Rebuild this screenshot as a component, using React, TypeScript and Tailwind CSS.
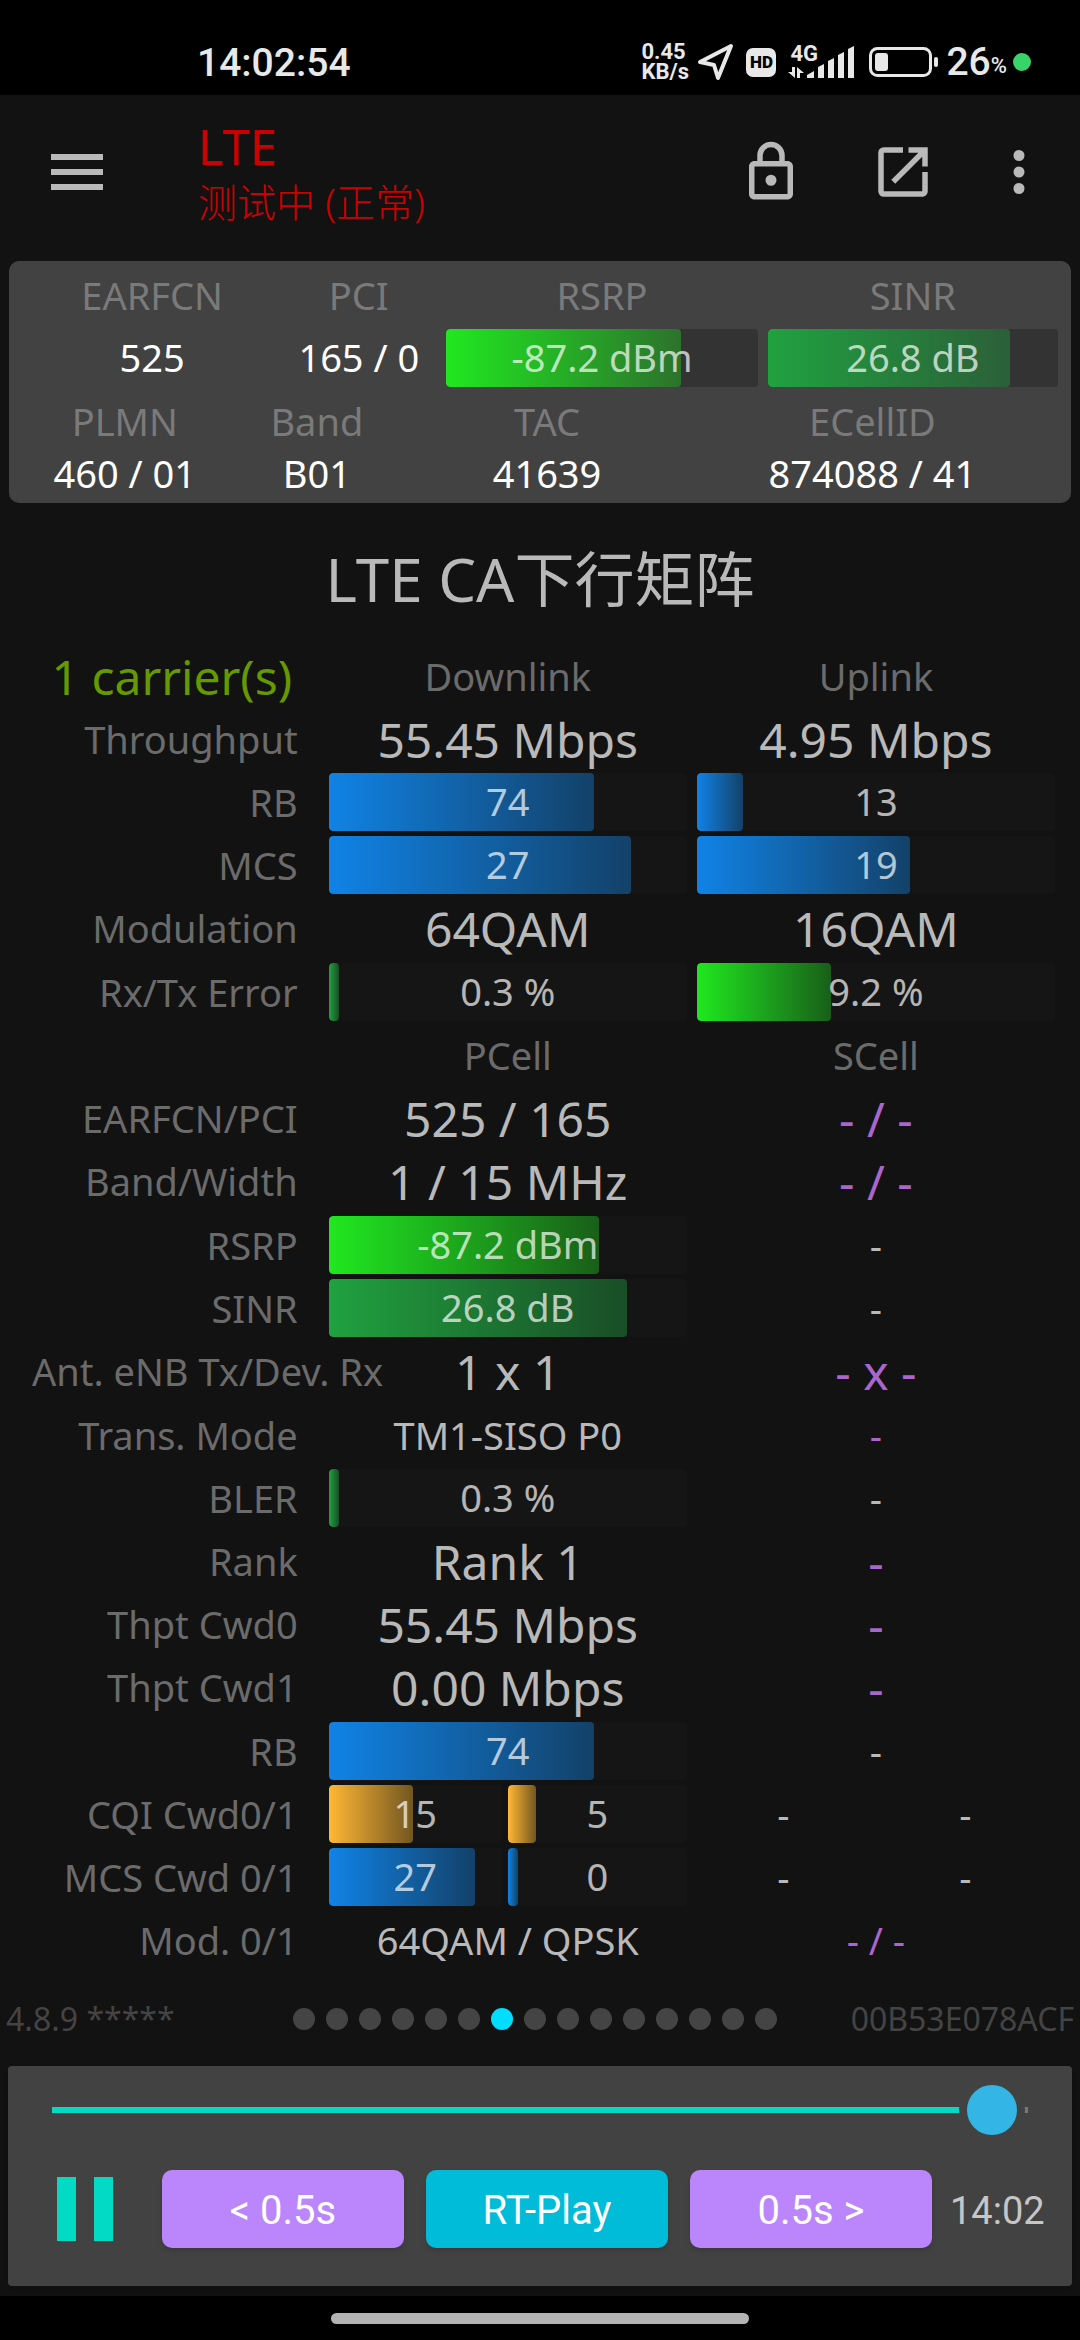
import type { ReactNode } from "react";
import clsx from "clsx";

type Tone = "blue" | "lime" | "green" | "amber";

type Cell =
  | { kind: "head"; text: string }
  | { kind: "text"; text: string; small?: boolean; none?: boolean }
  | { kind: "bar"; text: string; percent: number; tone: Tone }
  | { kind: "plain"; text: string }
  | { kind: "pair"; cells: [Cell, Cell] };

type Row = { label: string; cells: [Cell, Cell]; tall?: boolean };

const TONES: Record<Tone, string> = {
  blue: "from-[#1083e6] to-[#1083e6]/40",
  lime: "from-[#20e820] to-[#20e820]/35",
  green: "from-[#20a240] to-[#20a240]/40",
  amber: "from-[#ffb833] to-[#ffb833]/40",
};

const head = (text: string): Cell => ({ kind: "head", text });
const big = (text: string): Cell => ({ kind: "text", text });
const small = (text: string): Cell => ({ kind: "text", text, small: true });
const none = (text: string, isSmall = false): Cell => ({ kind: "text", text, small: isSmall, none: true });
const plain = (text: string): Cell => ({ kind: "plain", text });
const bar = (text: string, percent: number, tone: Tone): Cell => ({ kind: "bar", text, percent, tone });
const pair = (a: Cell, b: Cell): Cell => ({ kind: "pair", cells: [a, b] });

const ROWS: Row[] = [
  { label: "Throughput", cells: [big("55.45 Mbps"), big("4.95 Mbps")] },
  { label: "RB", cells: [bar("74", 74, "blue"), bar("13", 13, "blue")] },
  { label: "MCS", cells: [bar("27", 84.4, "blue"), bar("19", 59.4, "blue")] },
  { label: "Modulation", cells: [big("64QAM"), big("16QAM")], tall: true },
  { label: "Rx/Tx Error", cells: [bar("0.3 %", 0.3, "green"), bar("9.2 %", 37.4, "lime")] },
  { label: "", cells: [head("PCell"), head("SCell")] },
  { label: "EARFCN/PCI", cells: [big("525 / 165"), none("- / -")] },
  { label: "Band/Width", cells: [big("1 / 15 MHz"), none("- / -")], tall: true },
  { label: "RSRP", cells: [bar("-87.2 dBm", 75.5, "lime"), plain("-")] },
  { label: "SINR", cells: [bar("26.8 dB", 83.3, "green"), plain("-")] },
  { label: "Ant. eNB Tx/Dev. Rx", cells: [big("1 x 1"), none("- x -")], tall: true },
  { label: "Trans. Mode", cells: [small("TM1-SISO P0"), none("-", true)] },
  { label: "BLER", cells: [bar("0.3 %", 0.3, "green"), plain("-")] },
  { label: "Rank", cells: [big("Rank 1"), none("-")] },
  { label: "Thpt Cwd0", cells: [big("55.45 Mbps"), none("-")] },
  { label: "Thpt Cwd1", cells: [big("0.00 Mbps"), none("-")], tall: true },
  { label: "RB", cells: [bar("74", 74, "blue"), plain("-")] },
  { label: "CQI Cwd0/1", cells: [pair(bar("15", 48.8, "amber"), bar("5", 15.6, "amber")), pair(plain("-"), plain("-"))] },
  { label: "MCS Cwd 0/1", cells: [pair(bar("27", 84.4, "blue"), bar("0", 0, "blue")), pair(plain("-"), plain("-"))] },
  { label: "Mod. 0/1", cells: [small("64QAM / QPSK"), none("- / -", true)] },
];

const PAGES = 15;
const ACTIVE_PAGE = 6;

function Meter({ text, percent, tone, track }: { text: string; percent: number; tone: Tone; track: string }) {
  return (
    <div className={clsx("relative h-[58px] overflow-hidden rounded-[4px] text-center text-[38px] leading-[56px] text-white/70", track)}>
      {/* Level */}
      <div
        className={clsx("absolute inset-y-0 left-0 min-w-[10px] rounded-[4px] bg-linear-to-r", TONES[tone])}
        style={{ width: `${percent}%` }}
      />
      <span className="relative">{text}</span>
    </div>
  );
}

function CellView({ cell }: { cell: Cell }): ReactNode {
  switch (cell.kind) {
    case "head":
      return <div className="text-[38px] leading-[58px] text-[#6b6b6b]">{cell.text}</div>;
    case "bar":
      return <Meter text={cell.text} percent={cell.percent} tone={cell.tone} track="bg-[#151515]" />;
    case "plain":
      return <div className="text-[38px] leading-[58px] text-[#b9b9b9]">{cell.text}</div>;
    case "pair":
      return (
        <div className="grid grid-cols-[173fr_179fr] gap-1.5">
          <CellView cell={cell.cells[0]} />
          <CellView cell={cell.cells[1]} />
        </div>
      );
    default:
      return (
        <div
          className={clsx(
            cell.small ? "text-[38px] leading-[58px]" : "pt-0.5 text-[48px] leading-[60px]",
            cell.none ? "text-[#aa66cc]" : "text-[#b9b9b9]",
          )}
        >
          {cell.text}
        </div>
      );
  }
}

function StatusBar() {
  return (
    <div className="flex h-[95px] items-end bg-black pr-[49px] pb-3 pl-[197px] font-['Roboto',sans-serif] text-[#e8e8e8]">
      <span className="text-[39px] leading-[40px] font-medium">14:02:54</span>
      <div className="ml-auto flex items-center">
        <div className="flex w-[56px] flex-col text-[22px] leading-[20px] font-bold">
          <span>0.45</span>
          <span>KB/s</span>
        </div>
        <svg className="h-[38px] w-[37px]" viewBox="0 0 37 38" fill="none" stroke="currentColor" strokeWidth="4" strokeLinejoin="round" aria-hidden="true">
          <path d="M34 3 L3 19 L17 22 L21 35 Z" />
        </svg>
        <span className="ml-3 flex h-[29px] w-[30px] items-center justify-center rounded-[7px] bg-[#e8e8e8] text-[17px] leading-none font-black text-black">
          HD
        </span>
        <div className="relative ml-3 h-[34px] w-[68px]">
          <span className="absolute top-0 left-0.5 text-[22px] leading-[18px] font-bold">4G</span>
          <svg className="size-full" viewBox="0 0 68 34" fill="currentColor" aria-hidden="true">
            <path d="M4 22h3v11L0 27h4zM9 33h3v-5h4l-7-6z" />
            <path d="M19 33v-3l7-4v7zM30 33V22l6-3v14zM40 33V16l6-3v20zM50 33V10l6-3v26zM60 33V4l6-3v32z" />
          </svg>
        </div>
        <svg className="ml-[13px] h-[30px] w-[69px]" viewBox="0 0 69 30" aria-hidden="true">
          <rect x="1.5" y="1.5" width="60" height="27" rx="7" fill="none" stroke="currentColor" strokeWidth="3" />
          <rect x="6" y="6" width="13" height="18" rx="3" fill="currentColor" />
          <rect x="65" y="10" width="4" height="10" rx="2" fill="currentColor" />
        </svg>
        <span className="ml-2 text-[39px] leading-[42px] font-medium">26</span>
        <span className="self-end text-[22px] leading-[34px] font-medium">%</span>
        <span className="ml-1.5 size-[18px] rounded-full bg-[#3ad36a]" />
      </div>
    </div>
  );
}

function AppBar() {
  return (
    <header className="flex h-[154px] items-center pr-7 pl-[51px] text-[#b9b9b9]">
      <button type="button" aria-label="Menu" className="flex w-[52px] flex-col gap-[9px]">
        <span className="h-[6px] bg-current" />
        <span className="h-[6px] bg-current" />
        <span className="h-[6px] bg-current" />
      </button>
      <div className="ml-[95px] text-[#cc0000]">
        <h1 className="text-[49px] leading-[60px]">LTE</h1>
        <p className="text-[39px] leading-[52px] font-light">测试中 (正常)</p>
      </div>
      <div className="ml-auto flex items-center">
        <button type="button" aria-label="Lock">
          <svg className="size-[66px]" viewBox="0 0 24 24" fill="currentColor" aria-hidden="true">
            <path d="M12 17a2 2 0 1 0 0-4 2 2 0 0 0 0 4zm6-9h-1V6A5 5 0 0 0 7 6v2H6c-1.100 0-2 .9-2 2v10c0 1.100.9 2 2 2h12c1.100 0 2-.9 2-2V10c0-1.100-.9-2-2-2zM9 6a3 3 0 0 1 6 0v2H9V6zm9 14H6V10h12v10z" />
          </svg>
        </button>
        <button type="button" aria-label="Open in new window" className="ml-[66px]">
          <svg className="size-[66px]" viewBox="0 0 24 24" fill="currentColor" aria-hidden="true">
            <path d="M19 19H5V5h7V3H5a2 2 0 0 0-2 2v14a2 2 0 0 0 2 2h14c1.100 0 2-.9 2-2v-7h-2v7zM14 3v2h3.590l-9.830 9.830 1.410 1.410L19 6.410V10h2V3h-7z" />
          </svg>
        </button>
        <button type="button" aria-label="More" className="ml-[50px]">
          <svg className="size-[66px]" viewBox="0 0 24 24" fill="currentColor" aria-hidden="true">
            <circle cx="12" cy="6" r="2" />
            <circle cx="12" cy="12" r="2" />
            <circle cx="12" cy="18" r="2" />
          </svg>
        </button>
      </div>
    </header>
  );
}

function Field({ name, children }: { name: string; children: ReactNode }) {
  return (
    <div className="text-center text-[38px]">
      <dt className="pb-1 leading-[60px] text-[#7a7a7a]">{name}</dt>
      <dd className="leading-[56px] whitespace-nowrap text-white">{children}</dd>
    </div>
  );
}

function ShortField({ name, children }: { name: string; children: ReactNode }) {
  return (
    <div className="text-center text-[38px]">
      <dt className="leading-[52px] text-[#7a7a7a]">{name}</dt>
      <dd className="leading-[52px] whitespace-nowrap text-white">{children}</dd>
    </div>
  );
}

function CellSummary() {
  return (
    <section className="mx-[9px] mt-3 rounded-[10px] bg-[#424242] pt-1 pr-2 pb-1 pl-[19px]">
      <dl className="grid grid-cols-[248fr_165fr_321fr_300fr]">
        <Field name="EARFCN">525</Field>
        <Field name="PCI">165 / 0</Field>
        <Field name="RSRP">
          <div className="px-[5px]">
            <Meter text="-87.2 dBm" percent={75.5} tone="lime" track="bg-[#333333]" />
          </div>
        </Field>
        <Field name="SINR">
          <div className="px-[5px]">
            <Meter text="26.8 dB" percent={83.3} tone="green" track="bg-[#333333]" />
          </div>
        </Field>
      </dl>
      <dl className="mt-2 grid grid-cols-[193fr_190fr_269fr_380fr]">
        <ShortField name="PLMN">460 / 01</ShortField>
        <ShortField name="Band">B01</ShortField>
        <ShortField name="TAC">41639</ShortField>
        <ShortField name="ECellID">874088 / 41</ShortField>
      </dl>
    </section>
  );
}

function CaTable() {
  return (
    <div className="px-5">
      <table className="w-full table-fixed border-collapse text-center">
        <colgroup>
          <col className="w-[29.2%]" />
          <col className="w-[35.4%]" />
          <col className="w-[35.4%]" />
        </colgroup>
        <thead>
          <tr className="h-[63px]">
            <th className="p-0 pt-0.5 text-[48px] leading-[60px] font-normal whitespace-nowrap text-[#669900]">1 carrier(s)</th>
            <th className="p-0 font-normal">
              <CellView cell={head("Downlink")} />
            </th>
            <th className="p-0 font-normal">
              <CellView cell={head("Uplink")} />
            </th>
          </tr>
        </thead>
        <tbody>
          {ROWS.map((row, i) => (
            <tr key={i} className={row.tall ? "h-[64px]" : "h-[63px]"}>
              <th scope="row" className="p-0 pr-[26px] pl-3 text-right text-[38px] leading-[58px] font-normal whitespace-nowrap text-[#6b6b6b]">
                {row.label}
              </th>
              {row.cells.map((cell, j) => (
                <td key={j} className="px-[5px] py-0">
                  <CellView cell={cell} />
                </td>
              ))}
            </tr>
          ))}
        </tbody>
      </table>
    </div>
  );
}

function Player() {
  return (
    <section className="mx-2 h-[220px] rounded-[4px] bg-[#424242] px-[44px] pt-[11px] shadow-lg">
      <input
        type="range"
        aria-label="Position"
        min={0}
        max={1000}
        defaultValue={997}
        className="block h-[66px] w-full appearance-none bg-transparent [&::-webkit-slider-runnable-track]:h-[6px] [&::-webkit-slider-runnable-track]:bg-linear-to-r [&::-webkit-slider-runnable-track]:from-[#03dac5] [&::-webkit-slider-runnable-track]:from-95% [&::-webkit-slider-runnable-track]:to-[#777777] [&::-webkit-slider-runnable-track]:to-95% [&::-webkit-slider-thumb]:-mt-[30px] [&::-webkit-slider-thumb]:size-[66px] [&::-webkit-slider-thumb]:appearance-none [&::-webkit-slider-thumb]:rounded-full [&::-webkit-slider-thumb]:border-8 [&::-webkit-slider-thumb]:border-[#424242] [&::-webkit-slider-thumb]:bg-[#33b5e5]"
      />
      <div className="-mr-[18px] mt-[27px] flex items-center gap-[22px] font-['Roboto',sans-serif] text-[40px] text-white">
        <button type="button" aria-label="Pause" className="mr-1.5 ml-[5px] flex w-[77px] gap-[18px]">
          <span className="h-[64px] w-[19px] bg-[#03dac5]" />
          <span className="h-[64px] w-[19px] bg-[#03dac5]" />
        </button>
        <button type="button" className="h-[78px] flex-1 rounded-[10px] bg-[#bb86fc] pt-1 shadow-md">&lt; 0.5s</button>
        <button type="button" className="h-[78px] flex-1 rounded-[10px] bg-[#00bcd8] pt-1 shadow-md">RT-Play</button>
        <button type="button" className="h-[78px] flex-1 rounded-[10px] bg-[#bb86fc] pt-1 shadow-md">0.5s &gt;</button>
        <span className="-ml-1 w-[96px] pt-1 text-[38px] text-[#c6c6c6]">14:02</span>
      </div>
    </section>
  );
}

export default function App() {
  return (
    <div className="flex min-h-screen flex-col bg-[#121212] font-['Noto_Sans','Noto_Sans_CJK_SC',sans-serif]">
      <StatusBar />
      <AppBar />
      <main>
        <CellSummary />
        <h2 className="pt-9 pb-[25px] text-center text-[60px] leading-[80px] text-[#b9b9b9]">LTE CA下行矩阵</h2>
        <CaTable />
      </main>

      {/* Version, page dots, device id */}
      <div className="flex h-[95px] items-center px-1.5 text-[32px] text-[#444444]">
        <span className="w-[287px]">4.8.9 *****</span>
        <div className="flex gap-[11px]">
          {Array.from({ length: PAGES }, (_, i) => (
            <span key={i} className={clsx("size-[22px] rounded-full", i === ACTIVE_PAGE ? "bg-[#00ddff]" : "bg-[#444444]")} />
          ))}
        </div>
        <span className="ml-auto">00B53E078ACF</span>
      </div>

      <Player />

      {/* System gesture bar */}
      <div className="mt-2.5 flex flex-1 justify-center bg-black pt-[17px]">
        <div className="h-[11px] w-[418px] rounded-full bg-[#b3b3b3]" />
      </div>
    </div>
  );
}
